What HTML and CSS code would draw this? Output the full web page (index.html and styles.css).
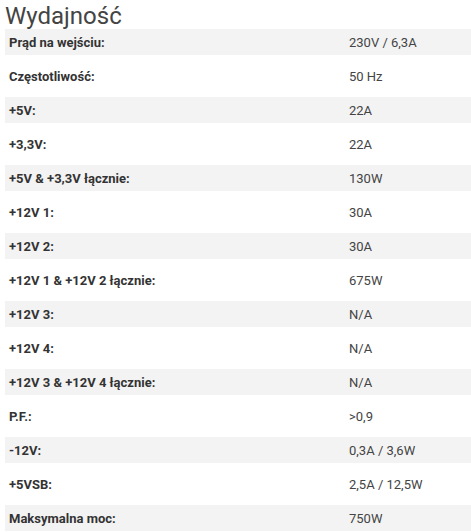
FILE: index.html
```html
<!DOCTYPE html>
<html lang="pl">
<head>
<meta charset="utf-8">
<title>Wydajność</title>
<link rel="stylesheet" href="styles.css">
</head>
<body>
<section class="perf">
  <h1 class="perf-title">Wydajność</h1>
  <div class="spec-list">
    <div class="spec-row alt"><span class="spec-label">Prąd na wejściu:</span><span class="spec-value">230V / 6,3A</span></div>
    <div class="spec-row"><span class="spec-label">Częstotliwość:</span><span class="spec-value">50 Hz</span></div>
    <div class="spec-row alt"><span class="spec-label">+5V:</span><span class="spec-value">22A</span></div>
    <div class="spec-row"><span class="spec-label">+3,3V:</span><span class="spec-value">22A</span></div>
    <div class="spec-row alt"><span class="spec-label">+5V &amp; +3,3V łącznie:</span><span class="spec-value">130W</span></div>
    <div class="spec-row"><span class="spec-label">+12V 1:</span><span class="spec-value">30A</span></div>
    <div class="spec-row alt"><span class="spec-label">+12V 2:</span><span class="spec-value">30A</span></div>
    <div class="spec-row"><span class="spec-label">+12V 1 &amp; +12V 2 łącznie:</span><span class="spec-value">675W</span></div>
    <div class="spec-row alt"><span class="spec-label">+12V 3:</span><span class="spec-value">N/A</span></div>
    <div class="spec-row"><span class="spec-label">+12V 4:</span><span class="spec-value">N/A</span></div>
    <div class="spec-row alt"><span class="spec-label">+12V 3 &amp; +12V 4 łącznie:</span><span class="spec-value">N/A</span></div>
    <div class="spec-row"><span class="spec-label">P.F.:</span><span class="spec-value">&gt;0,9</span></div>
    <div class="spec-row alt"><span class="spec-label">-12V:</span><span class="spec-value">0,3A / 3,6W</span></div>
    <div class="spec-row"><span class="spec-label">+5VSB:</span><span class="spec-value">2,5A / 12,5W</span></div>
    <div class="spec-row alt"><span class="spec-label">Maksymalna moc:</span><span class="spec-value">750W</span></div>
  </div>
</section>
</body>
</html>
```
FILE: styles.css
```css
html, body {
  margin: 0;
  padding: 0;
  background: #ffffff;
}
body {
  font-family: Roboto, "Liberation Sans", Arial, sans-serif;
  color: #333333;
}
.perf {
  padding-left: 5px;
}
.perf-title {
  margin: 4px 0 1px;
  font-size: 24px;
  line-height: 24px;
  font-weight: 400;
  color: #444444;
}
.spec-list {
  display: flex;
  flex-direction: column;
  gap: 8px;
}
.spec-row {
  display: grid;
  grid-template-columns: 340px 1fr;
  align-items: center;
  height: 26px;
  padding-left: 4px;
  font-size: 13px;
}
.spec-row.alt {
  background: #f3f3f3;
}
.spec-label {
  font-weight: 700;
  color: #333333;
}
.spec-value {
  color: #444444;
}
```
